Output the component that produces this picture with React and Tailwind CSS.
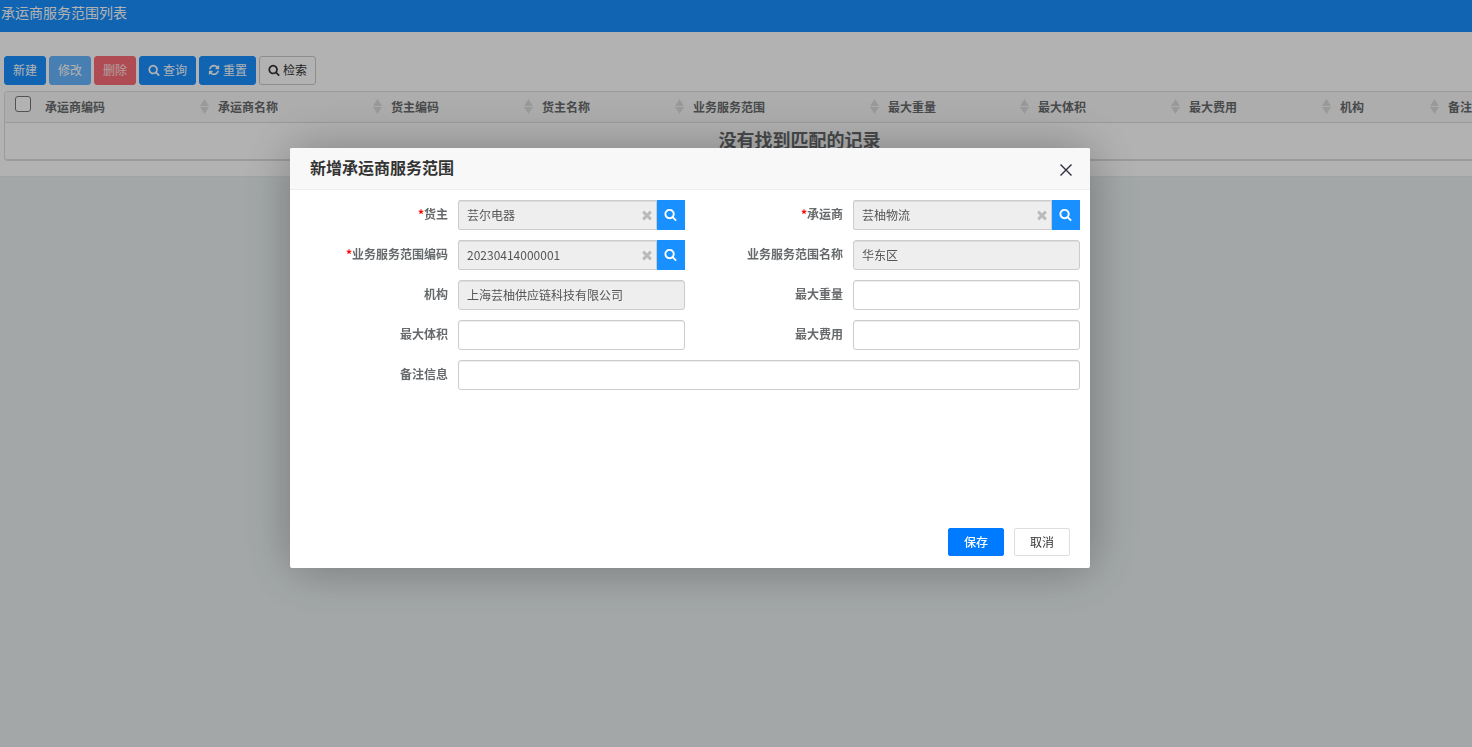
import { useState } from "react";
import { clsx } from "clsx";

const ICONS = {
  search:
    "M1216 832q0-185-131.5-316.5t-316.5-131.5-316.5 131.5-131.5 316.5 131.5 316.5 316.5 131.5 316.5-131.5 131.5-316.5zm512 832q0 52-38 90t-90 38q-54 0-90-38l-343-342q-179 124-399 124-143 0-273.5-55.5t-225-150-150-225-55.5-273.5 55.5-273.5 150-225 225-150 273.5-55.5 273.5 55.5 225 150 150 225 55.5 273.5q0 220-124 399l343 343q37 37 37 90z",
  refresh:
    "M1639 1056q0 5-1 7-64 268-268 434.5t-478 166.5q-146 0-282.5-55t-243.5-157l-129 129q-19 19-45 19t-45-19-19-45v-448q0-26 19-45t45-19h448q26 0 45 19t19 45-19 45l-137 137q71 66 161 102t187 36q134 0 250-65t186-179q11-17 53-117 8-23 30-23h192q13 0 22.5 9.5t9.5 22.5zm25-800v448q0 26-19 45t-45 19h-448q-26 0-45-19t-19-45 19-45l138-138q-148-137-349-137-134 0-250 65t-186 179q-11 17-53 117-8 23-30 23h-199q-13 0-22.5-9.5t-9.5-22.5v-7q65-268 270-434.5t480-166.5q146 0 284 55.5t245 156.5l130-129q19-19 45-19t45 19 19 45z",
  times:
    "M1490 1322q0 40-28 68l-136 136q-28 28-68 28t-68-28l-294-294-294 294q-28 28-68 28t-68-28l-136-136q-28-28-28-68t28-68l294-294-294-294q-28-28-28-68t28-68l136-136q28-28 68-28t68 28l294 294 294-294q28-28 68-28t68 28l136 136q28 28 28 68t-28 68l-294 294 294 294q28 28 28 68z",
};

const columns = [
  { title: "承运商编码", width: "w-[173px]" },
  { title: "承运商名称", width: "w-[173px]" },
  { title: "货主编码", width: "w-[151px]" },
  { title: "货主名称", width: "w-[151px]" },
  { title: "业务服务范围", width: "w-[195px]" },
  { title: "最大重量", width: "w-[150px]" },
  { title: "最大体积", width: "w-[151px]" },
  { title: "最大费用", width: "w-[151px]" },
  { title: "机构", width: "w-[108px]" },
  { title: "备注信息", width: "w-[154px]" },
];

const toolbar = [
  { text: "新建", style: "border-[#1890ff] bg-[#1890ff] text-white" },
  { text: "修改", style: "border-[#1890ff] bg-[#1890ff] text-white opacity-65" },
  { text: "删除", style: "border-[#fb6e77] bg-[#fb6e77] text-white/80" },
  { text: "查询", icon: "search", style: "border-[#1890ff] bg-[#1890ff] text-white" },
  { text: "重置", icon: "refresh", style: "border-[#1890ff] bg-[#1890ff] text-white" },
  { text: "检索", icon: "search", style: "border-[#ccc] bg-white text-[#333]" },
];

const fields = [
  { name: "owner", label: "货主", required: true, picker: true },
  { name: "carrier", label: "承运商", required: true, picker: true },
  { name: "scopeCode", label: "业务服务范围编码", required: true, picker: true },
  { name: "scopeName", label: "业务服务范围名称", readOnly: true },
  { name: "org", label: "机构", readOnly: true },
  { name: "maxWeight", label: "最大重量" },
  { name: "maxVolume", label: "最大体积" },
  { name: "maxCost", label: "最大费用" },
  { name: "remark", label: "备注信息", full: true },
];

function Icon({ name, className }) {
  return (
    <svg viewBox="0 0 1792 1792" fill="currentColor" aria-hidden="true" className={className}>
      <path d={ICONS[name]} />
    </svg>
  );
}

function SortIcon() {
  return (
    <svg viewBox="0 0 9 15" fill="#dcdcdc" aria-hidden="true" className="h-[15px] w-[9px] shrink-0">
      <path d="M4.5 0 9 7H0z" />
      <path d="M0 8h9l-4.5 7z" />
    </svg>
  );
}

function ListPage() {
  return (
    <div>
      <header className="h-8 bg-[#1890ff] pl-px text-sm leading-6 text-white">
        <h1>承运商服务范围列表</h1>
      </header>

      <main className="border-b border-[#e7eaec] bg-white pt-6 pb-[15px] pl-1">
        <div className="flex gap-[3px]">
          {toolbar.map((btn) => (
            <button
              key={btn.text}
              type="button"
              className={clsx(
                "flex h-[29px] items-center gap-[3px] rounded-[3px] border px-2 pb-0.5 text-xs",
                btn.style
              )}
            >
              {btn.icon && <Icon name={btn.icon} className="size-3" />}
              {btn.text}
            </button>
          ))}
        </div>

        <div className="mt-1.5 overflow-hidden rounded-l border-y border-l border-[#ddd]">
          <table className="w-[1589px] table-fixed border-collapse">
            <thead>
              <tr className="h-[30px] border-b border-[#ddd] bg-[#f8f8f8]">
                <th className="w-8 pl-2.5 text-left align-top">
                  <input
                    type="checkbox"
                    aria-label="全选"
                    className="mt-1 block size-4 appearance-none rounded-[3px] border border-[#767676] bg-white"
                  />
                </th>
                {columns.map((col) => (
                  <th key={col.title} className={clsx("pr-px pl-2 text-xs font-bold text-[#676a6c]", col.width)}>
                    <div className="flex items-center justify-between">
                      {col.title}
                      <SortIcon />
                    </div>
                  </th>
                ))}
              </tr>
            </thead>
            <tbody>
              <tr className="h-[37px] border-b border-[#ddd]">
                <td
                  colSpan={columns.length + 1}
                  className="pb-1 text-center text-lg leading-8 font-bold text-[#676a6c]"
                >
                  没有找到匹配的记录
                </td>
              </tr>
            </tbody>
          </table>
        </div>
      </main>
    </div>
  );
}

function Field({ field, value, onChange }) {
  const locked = field.readOnly || field.picker;

  return (
    <div className={clsx("flex gap-2.5", field.full && "col-span-2")}>
      <label
        htmlFor={field.name}
        className={clsx(
          "shrink-0 text-right text-xs leading-7 font-bold text-[#676a6c]",
          field.full ? "w-1/5" : "w-2/5"
        )}
      >
        {field.required && <span className="text-[#f00]">*</span>}
        {field.label}
      </label>
      <div className="flex min-w-0 flex-1">
        <div className="relative min-w-0 flex-1">
          <input
            id={field.name}
            type="text"
            value={value}
            readOnly={locked}
            onChange={(e) => onChange(field.name, e.target.value)}
            className={clsx(
              "h-[30px] w-full border border-[#ccc] px-2 pb-0.5 text-xs text-[#555] shadow-[inset_0_1px_1px_rgba(0,0,0,0.075)] outline-none",
              locked ? "bg-[#eee]" : "bg-white",
              field.picker ? "rounded-l-xs" : "rounded-[3px]"
            )}
          />
          {field.picker && (
            <button
              type="button"
              aria-label={`清除${field.label}`}
              onClick={() => onChange(field.name, "")}
              className="absolute top-2 right-[3px] text-[#bbb]"
            >
              <Icon name="times" className="size-[14px]" />
            </button>
          )}
        </div>
        {field.picker && (
          <button
            type="button"
            aria-label={`选择${field.label}`}
            className="flex h-[30px] w-7 items-center justify-center bg-[#1890ff] pr-px pb-0.5 text-white"
          >
            <Icon name="search" className="size-[13px]" />
          </button>
        )}
      </div>
    </div>
  );
}

function EditDialog({ onClose }) {
  const [form, setForm] = useState({
    owner: "芸尔电器",
    carrier: "芸柚物流",
    scopeCode: "20230414000001",
    scopeName: "华东区",
    org: "上海芸柚供应链科技有限公司",
  });

  const handleChange = (name, value) => setForm({ ...form, [name]: value });

  return (
    <div className="fixed inset-0 flex items-start justify-center bg-black/30 pt-[148px] pr-[92px]">
      <form
        role="dialog"
        aria-labelledby="dialog-title"
        onSubmit={(e) => e.preventDefault()}
        className="flex min-h-[420px] w-full max-w-[800px] flex-col rounded-xs bg-white shadow-[1px_1px_50px_rgba(0,0,0,0.3)]"
      >
        <div className="flex h-[42px] items-center justify-between rounded-t-xs border-b border-[#eee] bg-[#f8f8f8] pr-[18px] pl-5">
          <h2 id="dialog-title" className="pb-1 text-base font-bold text-[#333]">
            新增承运商服务范围
          </h2>
          <button type="button" aria-label="关闭" onClick={onClose} className="mt-0.5">
            <svg viewBox="0 0 12 12" fill="none" stroke="#2e2d3c" strokeWidth="1.4" className="size-3">
              <path d="M.5.5l11 11M11.5.5l-11 11" />
            </svg>
          </button>
        </div>

        <div className="grid flex-1 grid-cols-2 content-start gap-y-2.5 pt-2.5 pr-2.5">
          {fields.map((field) => (
            <Field key={field.name} field={field} value={form[field.name] ?? ""} onChange={handleChange} />
          ))}
        </div>

        <div className="flex justify-end gap-2.5 px-5 pb-3 text-xs">
          <button
            type="submit"
            className="h-7 rounded-xs border border-[#007bff] bg-[#007bff] px-[15px] font-medium text-white"
          >
            保存
          </button>
          <button
            type="button"
            onClick={onClose}
            className="h-7 rounded-xs border border-[#dedede] bg-white px-[15px] text-[#333]"
          >
            取消
          </button>
        </div>
      </form>
    </div>
  );
}

export default function App() {
  const [open, setOpen] = useState(true);

  return (
    <div className="min-h-screen overflow-hidden bg-[#eaf0f1] font-['Noto_Sans_CJK_SC',sans-serif]">
      <ListPage />
      {open && <EditDialog onClose={() => setOpen(false)} />}
    </div>
  );
}
